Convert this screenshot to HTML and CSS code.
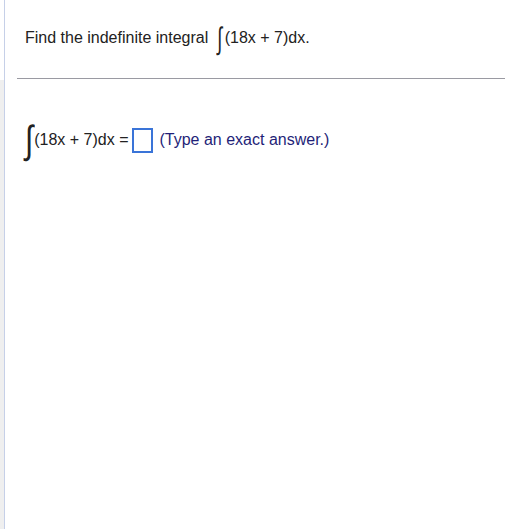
FILE: index.html
```html
<!DOCTYPE html>
<html>
<head>
<meta charset="utf-8">
<link rel="stylesheet" href="styles.css">
</head>
<body>
<div class="page">
  <div class="side">
    <div class="side-top"></div>
    <div class="side-rest"></div>
  </div>
  <div class="rule"></div>
  <div class="main">
    <div class="question">
      <span class="qtext">Find the indefinite integral</span>
      <span class="int int-small">∫</span><span class="expr">(18x + 7)dx.</span>
    </div>
    <div class="divider"></div>
    <div class="answer">
      <span class="int int-big">∫</span><span class="expr">(18x + 7)dx =</span>
      <span class="box"></span>
      <span class="hint">(Type an exact answer.)</span>
    </div>
  </div>
</div>
</body>
</html>
```
FILE: styles.css
```css
html, body {
  margin: 0;
  padding: 0;
  background: #ffffff;
}
.page {
  display: flex;
  height: 529px;
  font-family: "Liberation Sans", Arial, sans-serif;
  font-size: 16px;
  color: #222222;
}
.side {
  width: 4px;
  display: flex;
  flex-direction: column;
}
.side-top {
  height: 80px;
  background: #ffffff;
}
.side-rest {
  flex: 1;
  background: #efefef;
}
.rule {
  width: 1px;
  background: #c6d0e8;
}
.main {
  flex: 1;
}
.question {
  display: flex;
  align-items: center;
  padding: 27px 0 0 20px;
  height: 22px;
}
.qtext {
  margin-right: 9px;
}
.int {
  font-family: "Liberation Sans", sans-serif;
  display: inline-block;
  line-height: 1;
}
.int-small {
  font-size: 20px;
  transform: scale(0.9, 1.55);
  margin-right: 2px;
}
.int-big {
  font-size: 30px;
  transform: scale(1, 1.3);
  margin-left: 8px;
  margin-right: 1px;
}
.divider {
  margin: 29px 0 0 12px;
  height: 1px;
  background: #9a9aa2;
}
.answer {
  display: flex;
  align-items: center;
  padding: 47px 0 0 12px;
  height: 28px;
}
.box {
  display: inline-block;
  width: 17px;
  height: 21px;
  border: 2px solid #3a74d8;
  margin-left: 3px;
  margin-right: 7px;
}
.hint {
  color: #1f1f78;
}
```
